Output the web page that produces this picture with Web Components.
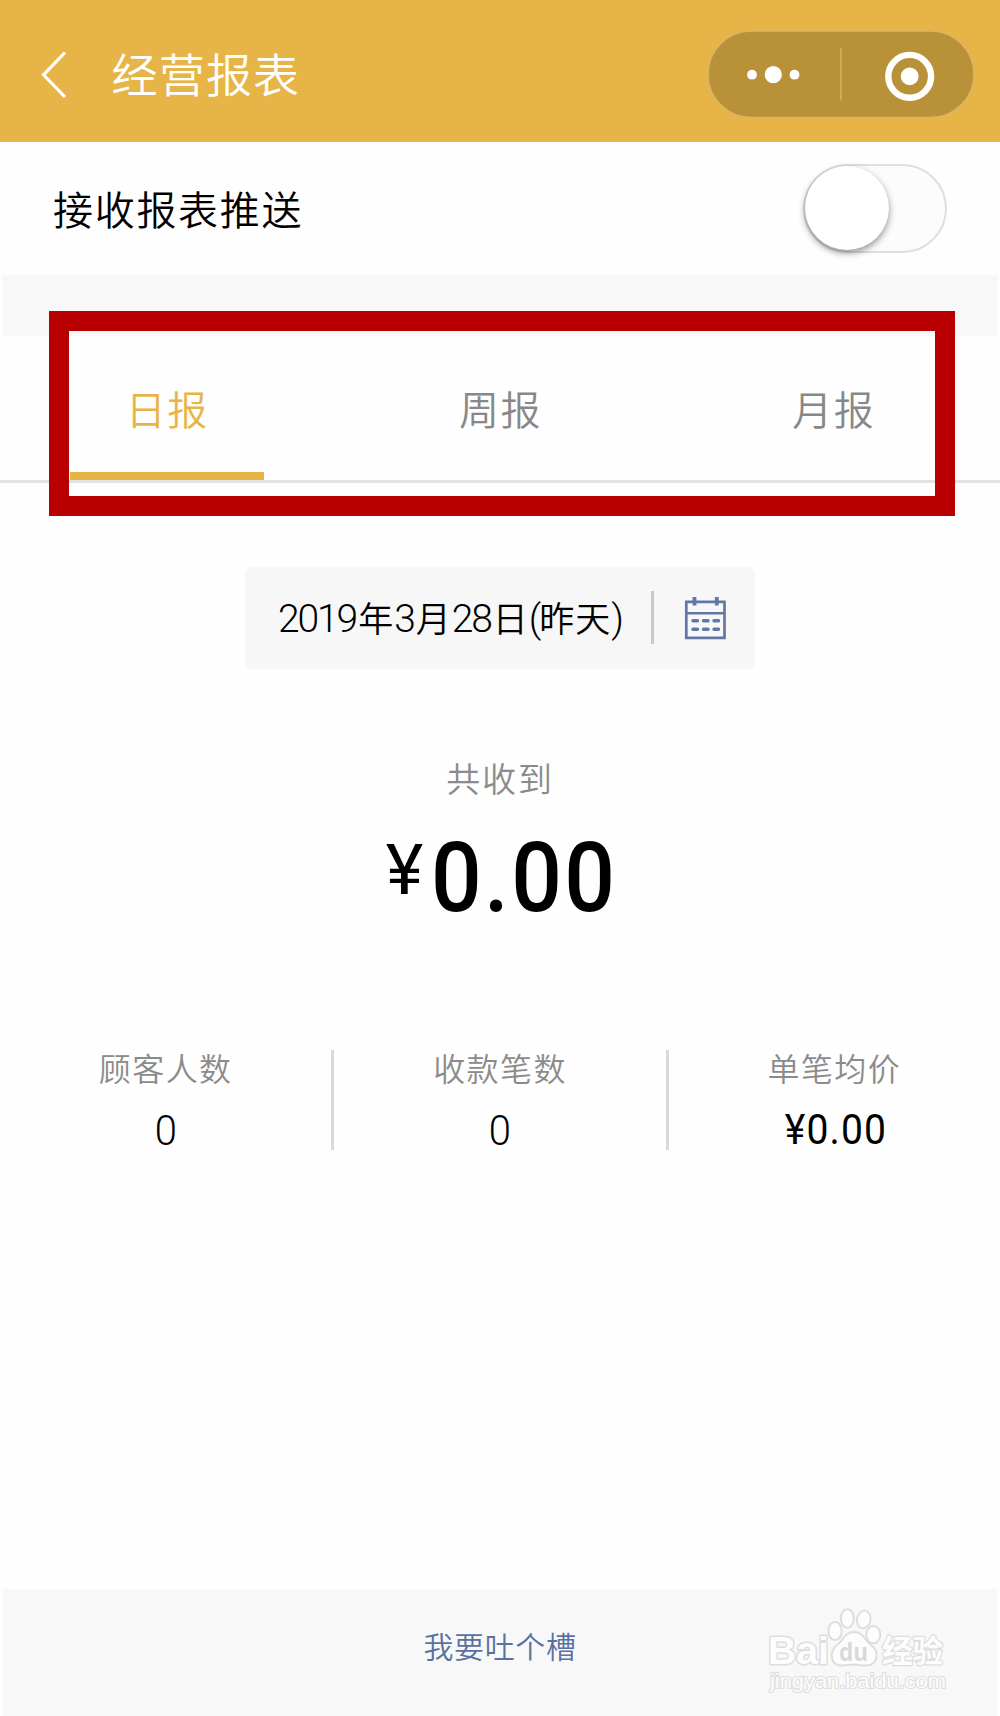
<!DOCTYPE html>
<html lang="zh-CN">
<head>
<meta charset="utf-8">
<title>经营报表</title>
<style>
html,body{margin:0;padding:0}
body{width:1000px;height:1716px;background:#fefefe;overflow:hidden;font-family:"Noto Sans CJK SC",sans-serif;font-weight:350;color:#000}
</style>
</head>
<body>
<report-page></report-page>
<script>
const define = (name, html) => customElements.define(name, class extends HTMLElement {
  constructor() {
    super();
    this.attachShadow({mode: 'open'}).innerHTML = html;
  }
});

define('capsule-menu', `
<style>
:host{display:block;width:268px;height:89px}
svg{display:block}
</style>
<svg width="268" height="89" viewBox="0 0 268 89">
  <rect x="1" y="1" width="266" height="86.500" rx="43.200" fill="#b99138" stroke="#d9b566" stroke-width="1.500"/>
  <g fill="#fff"><circle cx="45" cy="44.700" r="4.900"/><circle cx="66.300" cy="44.700" r="8.600"/><circle cx="87.500" cy="44.700" r="4.900"/><circle cx="202.700" cy="46.300" r="8.900"/></g>
  <path d="M134 18v52.500" stroke="#d0ad62" stroke-width="1.800"/>
  <circle cx="202.700" cy="46.300" r="21.400" fill="none" stroke="#fff" stroke-width="6.400"/>
</svg>`);

define('nav-bar', `
<style>
:host{display:flex;box-sizing:border-box;height:141.500px;padding:0 25px 0 41px;background:#e7b547;color:#fff}
.back{display:block;margin-top:51px;width:26px;height:48px;flex:none}
h1{margin:37px 0 0 44.500px;font-size:46px;line-height:70px;font-weight:350;letter-spacing:1.200px;flex:1;white-space:nowrap}
capsule-menu{margin-top:30px}
</style>
<svg class="back" viewBox="0 0 26 48"><path d="M24 1.500 2.500 23.800 24 46" fill="none" stroke="#fff" stroke-width="3.200"/></svg>
<h1><slot></slot></h1><capsule-menu></capsule-menu>`);

define('toggle-switch', `
<style>
:host{display:flex;box-sizing:border-box;width:144px;height:89px;border:2.500px solid #dfdfdf;border-radius:45px;background:#fcfcfc}
i{display:block;width:84px;height:84px;border-radius:50%;background:#fff;box-shadow:0 3px 7px rgba(0,0,0,.42)}
</style><i></i>`);

define('push-row', `
<style>
:host{display:flex;box-sizing:border-box;height:133.500px;padding:22px 53px 0 53px;justify-content:space-between}
span{font-size:40px;line-height:60px;letter-spacing:1.700px;margin-top:14px}
</style><span><slot></slot></span><toggle-switch></toggle-switch>`);

define('tab-item', `
<style>
:host{display:flex;flex:1;flex-direction:column;align-items:center;color:#888}
span{display:block;font-size:40px;line-height:60px;letter-spacing:1.500px;margin:42px 0 0 1px}
i{display:block;width:194px;height:8.500px;margin-top:34.500px}
:host([active]){color:#e7b547}
:host([active]) i{background:#e7b547}
</style><span><slot></slot></span><i></i>`);

define('tab-bar', `
<style>
:host{display:flex;position:relative;box-sizing:border-box;height:147px;border-bottom:3px solid #e2e2e2}
.frame{position:absolute;left:48.500px;top:-25px;width:866px;height:165px;border:20px solid #b90000}
</style><slot></slot><div class="frame"></div>`);

define('date-picker', `
<style>
:host{display:flex;box-sizing:border-box;width:510px;height:102px;margin:0 auto;padding-left:33px;border-radius:7px;background:#f7f7f7}
.date{display:flex;align-items:baseline;font-size:35px;line-height:50px;margin-top:24.500px;width:373px;letter-spacing:1px;white-space:nowrap}
.date b{font:300 39px/50px Roboto,sans-serif;letter-spacing:-2.100px;margin-right:2px}
.date b:nth-of-type(4){margin-right:0}
.rule{width:3px;height:53px;background:#c9c9c9;margin-top:24px}
svg{display:block;margin:29px 0 0 29.500px}
</style>
<div class="date"><b>2019</b>年<b>3</b>月<b>28</b>日<b>(</b>昨天<b>)</b></div>
<div class="rule"></div>
<svg width="43" height="44" viewBox="0 0 42 44" fill="none" stroke="#6178a5">
  <path d="M1.800 5.800H40V41.800H1.800Z" stroke-width="2.700"/>
  <path d="M2 17.300H40" stroke-width="2.500"/>
  <path d="M10 1V9.500M32.300 1V9.500" stroke-width="3.800"/>
  <path d="M8.500 24.800H13M19 24.800H23.500M29.500 24.800H34M8.500 33.200H13M19 33.200H23.500M29.500 33.200H34" stroke-width="3.500" stroke-linecap="round"/>
</svg>`);

define('total-amount', `
<style>
:host{display:flex;flex-direction:column;align-items:center}
.label{font-size:34px;line-height:50px;letter-spacing:1.800px;color:#8b8b8b}
.sum{display:flex;align-items:flex-start;font-family:Roboto,sans-serif;white-space:nowrap;margin-top:20px}
.cur{font-size:70px;line-height:80px;font-weight:400;transform:scaleX(1.02);margin:7px 0 0 4px}
.num{font-size:96px;line-height:110px;font-weight:500;letter-spacing:2.500px;transform:scaleX(.93);transform-origin:100% 50%;margin-left:-6px}
</style>
<div class="label"><slot></slot></div>
<div class="sum"><span class="cur">¥</span><span class="num">0.00</span></div>`);

define('stat-cell', `
<style>
:host{display:flex;flex:1;flex-direction:column;align-items:center;height:100px}
.l{font-size:32px;line-height:46px;letter-spacing:1.400px;color:#8b8b8b;margin-top:-6px}
.v{font-family:Roboto,sans-serif;font-weight:300;font-size:43px;line-height:50px;margin-top:15px;transform:scaleX(.93)}
:host([money]) .v{font-size:42px;font-weight:400;letter-spacing:1.200px;margin-left:3px}
</style><span class="l"><slot></slot></span><span class="v"><slot name="value"></slot></span>`);

define('stat-row', `
<style>
:host{display:flex}
i{width:3px;height:100px;background:#dadada}
</style><slot name="a"></slot><i></i><slot name="b"></slot><i></i><slot name="c"></slot>`);

define('brand-mark', `
<style>
:host{display:block;width:200px;height:100px}
svg{display:block;overflow:visible}
text{paint-order:stroke;stroke-linejoin:round}
</style>
<svg width="200" height="100" viewBox="0 0 200 100" fill="#fdfdfd" stroke="#dedede" stroke-width="2">
  <text x="3" y="63.500" font-family="Liberation Sans" font-weight="700" font-size="39" textLength="61" lengthAdjust="spacingAndGlyphs" stroke-width="3">Bai</text>
  <ellipse cx="70" cy="31" rx="6.700" ry="9"/><ellipse cx="82.300" cy="18.500" rx="6.500" ry="9.300"/><ellipse cx="98.700" cy="19.500" rx="6.800" ry="8.800" transform="rotate(12 98.700 19.500)"/><ellipse cx="108.300" cy="34.800" rx="7" ry="8.700"/>
  <path d="M89 32C98 32 99 39.500 106 45C116 52.500 112 65.500 101 65.500C96 65.500 93 64.500 89 64.500C84 64.500 81 65.500 76 65.500C66 65.500 63 52.500 72 45C79 39.500 80 32 89 32Z"/>
  <text x="74" y="60.500" font-family="Open Sans" font-weight="700" font-size="25" textLength="29" lengthAdjust="spacingAndGlyphs" fill="#d9d9d9" stroke="none">du</text>
  <text x="117" y="61.500" font-family="Noto Sans CJK SC" font-weight="700" font-size="31" textLength="61" lengthAdjust="spacingAndGlyphs" stroke-width="2.500">经验</text>
  <text x="5" y="88" font-family="Liberation Sans" font-size="19.500" textLength="176" lengthAdjust="spacingAndGlyphs" stroke-width="2">jingyan.baidu.com</text>
</svg>`);

define('page-footer', `
<style>
:host{display:block;position:relative;height:127px;margin:0 2px;background:#f8f8f8;text-align:center}
a{display:inline-block;margin-top:34px;font-size:30px;line-height:44px;letter-spacing:.600px;color:#5a70a0}
brand-mark{position:absolute;left:763px;top:11px}
</style><a><slot></slot></a><brand-mark></brand-mark>`);

define('report-page', `
<style>
:host{display:flex;flex-direction:column;width:1000px;height:1716px}
.band{height:60.500px;margin:0 2px;background:#f8f8f8;flex:none}
date-picker{margin-top:84.500px}
total-amount{margin-top:84px;height:200px}
stat-row{margin-top:97px}
page-footer{margin-top:auto}
nav-bar,push-row,tab-bar{flex:none}
</style>
<nav-bar>经营报表</nav-bar>
<push-row>接收报表推送</push-row>
<div class="band"></div>
<tab-bar><tab-item active>日报</tab-item><tab-item>周报</tab-item><tab-item>月报</tab-item></tab-bar>
<date-picker></date-picker>
<total-amount>共收到</total-amount>
<stat-row>
  <stat-cell slot="a">顾客人数<span slot="value">0</span></stat-cell>
  <stat-cell slot="b">收款笔数<span slot="value">0</span></stat-cell>
  <stat-cell slot="c" money>单笔均价<span slot="value">¥0.00</span></stat-cell>
</stat-row>
<page-footer>我要吐个槽</page-footer>`);
</script>
</body>
</html>
